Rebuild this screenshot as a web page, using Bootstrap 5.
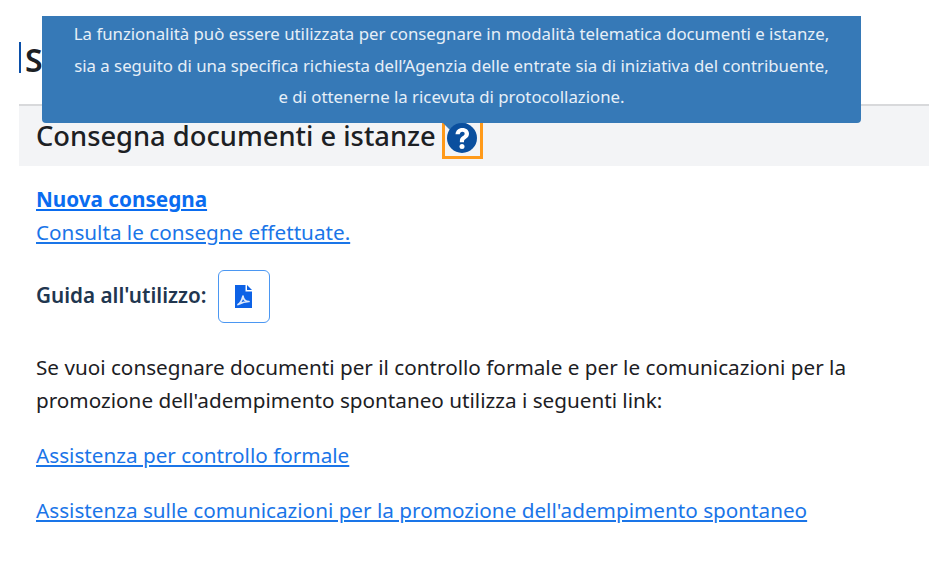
<!DOCTYPE html>
<html lang="it">
<head>
<meta charset="utf-8">
<title>Consegna documenti e istanze</title>
<link href="https://cdn.jsdelivr.net/npm/bootstrap@5.3.0/dist/css/bootstrap.min.css" rel="stylesheet">
<style>
html,body{height:100%;overflow:hidden}
body{background:#fff;color:#1c2024;font-family:"Noto Sans",sans-serif;font-size:20.7px;line-height:33px}
.page-wrap{position:relative;padding:42px 16px 0 19px}
.side-title{border-left:2px solid #0b4fa8;height:31px;padding-left:4px;font-size:32px;line-height:36px;font-weight:600;margin-bottom:31px}
.head-band{background:#f3f4f6;border-top:2px solid #d8d9db;height:62px;padding:12px 17px 0;display:flex;align-items:flex-start}
.head-band h1{font-size:27.3px;line-height:36px;font-weight:500;margin:0;white-space:nowrap}
.help-box{width:41px;height:41px;border:3px solid #ff9a1a;border-top:0;margin:0 0 0 6px;display:flex;align-items:flex-start;justify-content:center;padding-top:5px}
.help-box svg{width:30px;height:30px;display:block;position:relative;z-index:2}
.tip-box{position:absolute;left:42px;top:16px;width:819px;height:107px;background:#3679b7;color:#e6eff7;border-radius:0 0 4px 4px;text-align:center;font-size:16.8px;line-height:31.5px;padding-top:2px;white-space:nowrap;z-index:1}
.tip-box::after{content:"";position:absolute;left:401px;top:107px;border-style:solid;border-width:12px 12px 0;border-color:#3679b7 transparent transparent}
.content-area{padding:17px 17px 0}
.content-area a{color:#1a75e8;text-underline-offset:2px}
.lead-link{font-weight:700;color:#0a6cf0!important}
.guide-row{display:flex;align-items:center;margin-top:21px;margin-bottom:28px}
.guide-row strong{color:#21364f;font-weight:600;margin-right:11px;padding-bottom:3px}
.pdf-btn{width:52px;height:53px;border:1.5px solid #4b97f2;border-radius:6px;display:flex;align-items:center;justify-content:center;padding:0;background:#fff}
.pdf-btn svg{width:17px;height:23px;display:block}
.block-text{margin:0 0 22px;width:840px}
.link-line{margin:0 0 22px}
</style>
</head>
<body>
<div class="page-wrap">
  <div class="side-title">S</div>
  <div class="head-band">
    <h1>Consegna documenti e istanze</h1>
    <div class="help-box">
      <svg viewBox="0 0 24 24" aria-hidden="true"><circle cx="12" cy="12" r="12" fill="#0a4f9e"/><path d="M6.800 8.900C7.100 5.800 9.200 3.900 12.300 3.900c3.200 0 5.300 1.900 5.300 4.600 0 1.900-1 3-2.500 4-1.200.8-1.500 1.200-1.500 2.300v.6h-3.300v-1c0-1.800.6-2.800 2.100-3.800 1.200-.8 1.700-1.300 1.700-2.100 0-.9-.7-1.500-1.800-1.500-1.200 0-2 .7-2.100 2z" fill="#fff"/><circle cx="12" cy="18.800" r="2" fill="#fff"/></svg>
    </div>
  </div>
  <div class="content-area">
    <a class="lead-link d-block" href="#">Nuova consegna</a>
    <a class="d-block" href="#">Consulta le consegne effettuate.</a>
    <div class="guide-row">
      <strong>Guida all'utilizzo:</strong>
      <button type="button" class="btn pdf-btn" aria-label="Guida PDF">
        <svg viewBox="0 0 17 23" aria-hidden="true"><path d="M0 0h10.500v6.500H17V23H0z" fill="#0d62e6"/><path d="M12 0l5 5h-5z" fill="#0d62e6"/><path d="M3 19.500c2-1 4-4.500 5-8.500.3 3 2 5.500 6 5.500-3 0-7 1-11 3z" fill="none" stroke="#dfe9fb" stroke-width="1.700" stroke-linejoin="round"/></svg>
      </button>
    </div>
    <p class="block-text">Se vuoi consegnare documenti per il controllo formale e per le comunicazioni per la promozione dell'adempimento spontaneo utilizza i seguenti link:</p>
    <p class="link-line"><a href="#">Assistenza per controllo formale</a></p>
    <p class="link-line"><a href="#">Assistenza sulle comunicazioni per la promozione dell'adempimento spontaneo</a></p>
  </div>
  <div class="tip-box">La funzionalità può essere utilizzata per consegnare in modalità telematica documenti e istanze,<br>sia a seguito di una specifica richiesta dell’Agenzia delle entrate sia di iniziativa del contribuente,<br>e di ottenerne la ricevuta di protocollazione.</div>
</div>
<script src="https://cdn.jsdelivr.net/npm/bootstrap@5.3.0/dist/js/bootstrap.bundle.min.js"></script>
</body>
</html>
